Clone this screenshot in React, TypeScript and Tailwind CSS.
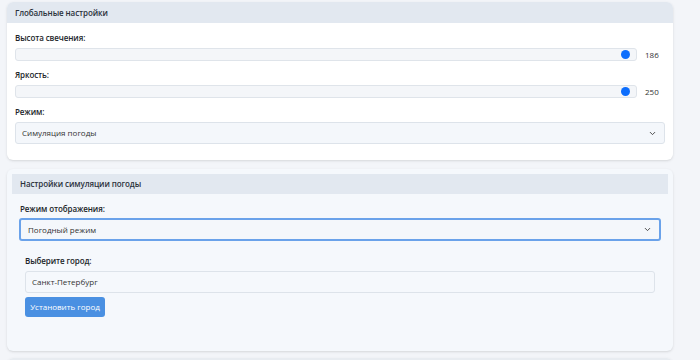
import React from 'react';
import { ChevronDown } from 'lucide-react';

const Slider = ({ value }: { value: number }) => (
  <div className="flex items-center h-[13px] mb-2">
    <div className="flex-1 h-[13px] rounded-[3px] bg-[#f4f6f9] border border-[#dfe4ea] flex items-center justify-end pr-[6px]">
      <div className="w-[9px] h-[9px] rounded-full bg-[#0d6efd]" />
    </div>
    <span className="w-[20px] ml-2 text-[8px] leading-3 text-[#333]">{value}</span>
  </div>
);

const Label = ({ children }: { children: React.ReactNode }) => (
  <div className="h-3 mb-1 text-[8px] leading-3 font-semibold tracking-[-0.1px] text-[#212529]">{children}</div>
);

export default function App() {
  return (
    <div className="min-h-screen bg-[#f3f5f9] font-['Open_Sans',sans-serif] pt-[2px] overflow-hidden">
      <div className="w-[666px] ml-[7px]">
        {/* Global settings */}
        <div className="bg-white rounded-md shadow-sm">
          <div className="h-[21px] bg-[#e2e8f0] rounded-t-md px-2 flex items-center text-[8px] font-semibold tracking-[-0.1px] text-[#2b323c]">
            Глобальные настройки
          </div>
          <div className="px-2 pt-[9px] pb-4">
            <Label>Высота свечения:</Label>
            <Slider value={186} />
            <Label>Яркость:</Label>
            <Slider value={250} />
            <Label>Режим:</Label>
            <div className="h-[22px] mt-1 bg-[#f4f7fb] border border-[#dde3ea] rounded-[3px] flex items-center justify-between pl-[6px] pr-[7px] text-[8px] text-[#333]">
              <span>Симуляция погоды</span>
              <ChevronDown className="w-[9px] h-[9px] text-[#444]" strokeWidth={2.5} />
            </div>
          </div>
        </div>

        {/* Weather simulation settings */}
        <div className="mt-[9px] bg-[#f5f8fc] rounded-md shadow-sm p-[5px] pb-[34px]">
          <div className="h-[20px] bg-[#e2e8f0] px-2 flex items-center text-[8px] font-semibold tracking-[-0.1px] text-[#2b323c]">
            Настройки симуляции погоды
          </div>
          <div className="px-[7px] pt-[9px]">
            <div className="h-3 mb-[3px] pl-px text-[8px] leading-3 font-semibold tracking-[-0.1px] text-[#212529]">Режим отображения:</div>
            <div className="h-[23px] bg-[#f4f7fb] border-2 border-[#6aa2ea] rounded-[3px] flex items-center justify-between pl-[7px] pr-[7px] text-[8px] text-[#333]">
              <span>Погодный режим</span>
              <ChevronDown className="w-[9px] h-[9px] text-[#444]" strokeWidth={2.5} />
            </div>
            <div className="px-[6px] pt-[14px]">
              <Label>Выберите город:</Label>
              <div className="h-[22px] mt-[3px] bg-[#f5f8fc] border border-[#dde3ea] rounded-[3px] flex items-center pl-[6px] text-[8px] text-[#333]">
                Санкт-Петербург
              </div>
              <button className="mt-1 w-[80px] h-[20px] rounded-[3px] bg-[#4a90e2] text-white text-[8px] whitespace-nowrap flex items-center justify-center">
                Установить город
              </button>
            </div>
          </div>
        </div>

        {/* Next card */}
        <div className="mt-[7px] bg-white rounded-md shadow-sm">
          <div className="h-[21px] bg-[#e8ecf1] rounded-t-md" />
        </div>
      </div>
    </div>
  );
}
